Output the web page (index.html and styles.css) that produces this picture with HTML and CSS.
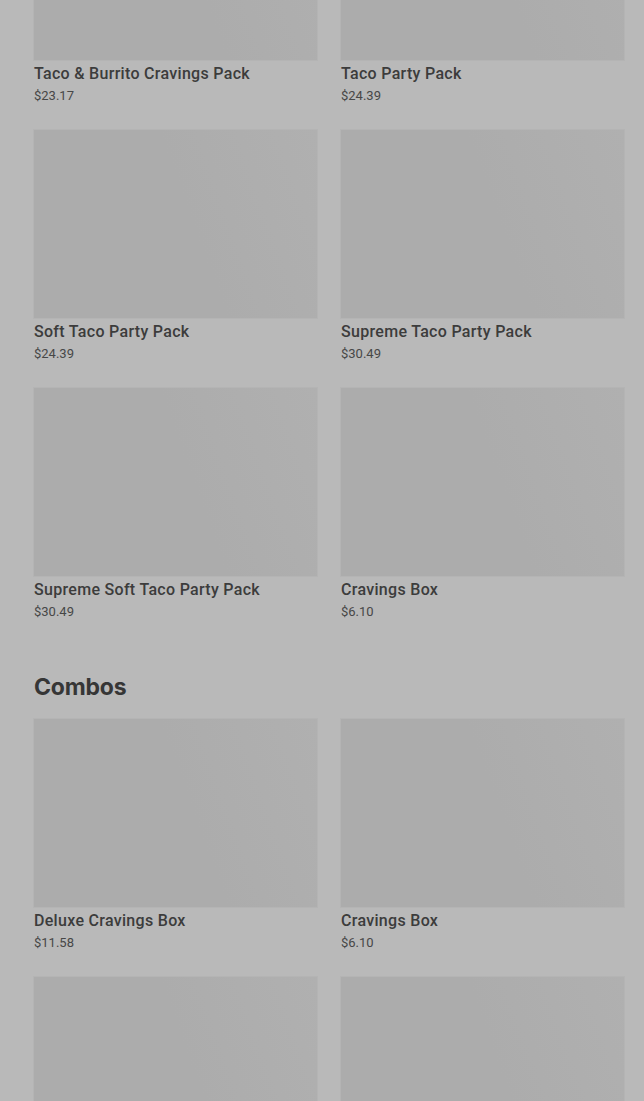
FILE: index.html
```html
<!DOCTYPE html>
<html lang="en">

<head>
    <meta charset="UTF-8">
    <meta name="viewport" content="width=device-width, initial-scale=1.0">
    <title>Taco Bell - Menu</title>
    <link rel="stylesheet" href="styles.css">
</head>

<body>
    <div class="menu">
        <section class="menu-section">
            <div class="item-grid">
                <div class="item">
                    <div class="item-image"></div>
                    <div class="item-name">Taco &amp; Burrito Cravings Pack</div>
                    <div class="item-price">$23.17</div>
                </div>
                <div class="item">
                    <div class="item-image"></div>
                    <div class="item-name">Taco Party Pack</div>
                    <div class="item-price">$24.39</div>
                </div>
                <div class="item">
                    <div class="item-image"></div>
                    <div class="item-name">Soft Taco Party Pack</div>
                    <div class="item-price">$24.39</div>
                </div>
                <div class="item">
                    <div class="item-image"></div>
                    <div class="item-name">Supreme Taco Party Pack</div>
                    <div class="item-price">$30.49</div>
                </div>
                <div class="item">
                    <div class="item-image"></div>
                    <div class="item-name">Supreme Soft Taco Party Pack</div>
                    <div class="item-price">$30.49</div>
                </div>
                <div class="item">
                    <div class="item-image"></div>
                    <div class="item-name">Cravings Box</div>
                    <div class="item-price">$6.10</div>
                </div>
            </div>
        </section>

        <section class="menu-section">
            <h2 class="section-title">Combos</h2>
            <div class="item-grid">
                <div class="item">
                    <div class="item-image"></div>
                    <div class="item-name">Deluxe Cravings Box</div>
                    <div class="item-price">$11.58</div>
                </div>
                <div class="item">
                    <div class="item-image"></div>
                    <div class="item-name">Cravings Box</div>
                    <div class="item-price">$6.10</div>
                </div>
            </div>
            <div class="item-grid item-grid-more">
                <div class="item">
                    <div class="item-image"></div>
                </div>
                <div class="item">
                    <div class="item-image"></div>
                </div>
            </div>
        </section>
    </div>
</body>

</html>
```

FILE: styles.css
```css
* {
    margin: 0;
    padding: 0;
    box-sizing: border-box;
    font-family: 'Roboto', 'Liberation Sans', sans-serif;
}

body {
    background: #b9b9b9;
    overflow: hidden;
}

/* page is scrolled part way down the first section */
.menu {
    margin-top: -128px;
    padding: 0 20px 0 34px;
}

.menu-section {
    margin-bottom: 49px;
}

.section-title {
    font-family: 'Inter', 'Roboto', sans-serif;
    font-size: 23px;
    font-weight: 700;
    line-height: 32px;
    letter-spacing: -0.2px;
    color: #363636;
    margin-bottom: 16px;
}

.item-grid {
    display: grid;
    grid-template-columns: repeat(2, 1fr);
    column-gap: 24px;
    row-gap: 24px;
}

.item-grid-more {
    margin-top: 24px;
}

.item-image {
    height: 188px;
    background: linear-gradient(70deg, #acacac 55%, #b0b0b0 100%);
    box-shadow: 0 0 0 1px #b4b4b4;
}

.item-name {
    margin-top: 2px;
    font-size: 16px;
    font-weight: 500;
    line-height: 24px;
    letter-spacing: 0.3px;
    color: #3c3c3c;
}

.item-price {
    font-size: 13px;
    line-height: 20px;
    color: #474747;
}
```
